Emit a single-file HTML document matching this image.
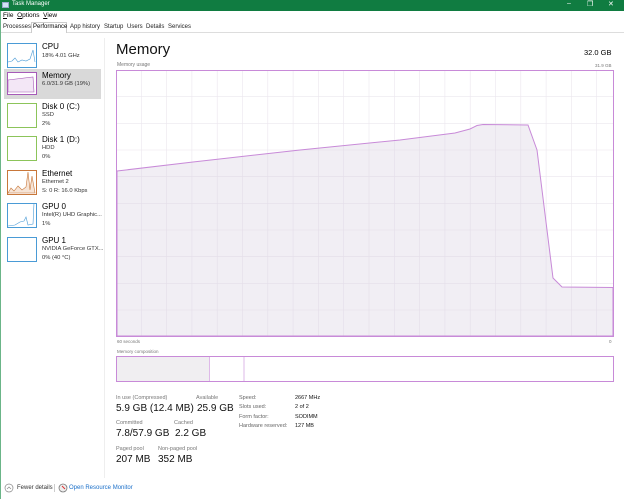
<!DOCTYPE html>
<html><head><meta charset="utf-8"><style>
*{margin:0;padding:0;box-sizing:border-box}
body{width:624px;height:499px;overflow:hidden;background:#fff;font-family:"Liberation Sans",sans-serif;position:relative;color:#000}
.a{position:absolute;white-space:nowrap}
.tb{left:0;top:0;width:624px;height:11px;background:#107c41}
.it{position:absolute;left:4px;width:97px;height:32px}
.th{position:absolute;left:3px;top:3px;width:30px;height:25px;border:1px solid}
.nm{position:absolute;left:38px;top:2px;font-size:8px;white-space:nowrap}
.s{position:absolute;left:38px;font-size:5.8px;color:#333;white-space:nowrap}
.lb{font-size:5.5px;color:#777}
.v{font-size:10px;color:#111}
.k{font-size:5.5px;color:#666}
.kv{font-size:5.5px;color:#111}
.tab{position:absolute;top:24px;font-size:6px;color:#222;white-space:nowrap}
</style></head><body>
<div class="a tb"></div>
<div class="a" style="left:2px;top:2px;width:7px;height:6px;background:#cfe3f5;border:1px solid #9ac"></div>
<div class="a" style="left:12px;top:1px;font-size:6px;color:#fff">Task Manager</div>
<div class="a" style="left:567px;top:0;font-size:7px;color:#fff">–</div>
<div class="a" style="left:587px;top:0;font-size:7px;color:#fff">❐</div>
<div class="a" style="left:608px;top:0;font-size:7px;color:#fff">✕</div>
<div class="a" style="left:0;top:11px;width:1px;height:488px;background:#6bb588"></div>
<div class="a" style="left:3px;top:12px;font-size:6.5px"><u>F</u>ile&nbsp;&nbsp;<u>O</u>ptions&nbsp;&nbsp;<u>V</u>iew</div>
<div class="a" style="left:1px;top:23px;width:623px;height:10px;border-bottom:1px solid #ddd"></div>
<div class="tab" style="left:3px">Processes</div>
<div class="a" style="left:31px;top:22px;width:36px;height:11px;border:1px solid #ccc;border-bottom:none;background:#fff"></div>
<div class="tab" style="left:33px;color:#000">Performance</div>
<div class="tab" style="left:70px">App history</div>
<div class="tab" style="left:104px">Startup</div>
<div class="tab" style="left:127px">Users</div>
<div class="tab" style="left:146px">Details</div>
<div class="tab" style="left:168px">Services</div>
<div class="a" style="left:104px;top:38px;width:1px;height:440px;background:#eee"></div>

<div class="it" style="top:40px"><div class="th" style="border-color:#4a9bd6"></div><div class="nm">CPU</div><div class="s" style="top:13px">18% 4.01 GHz</div></div>
<div class="it" style="top:69px;background:#d9d9d9;height:30px"><div class="th" style="border-color:#a65ab8;background:#fff;height:23px;top:3px"></div><div class="nm">Memory</div><div class="s" style="top:12px">6.0/31.9 GB (19%)</div></div>
<div class="it" style="top:100px"><div class="th" style="border-color:#8cc45a"></div><div class="nm">Disk 0 (C:)</div><div class="s" style="top:12px">SSD</div><div class="s" style="top:21px">2%</div></div>
<div class="it" style="top:133px"><div class="th" style="border-color:#8cc45a"></div><div class="nm">Disk 1 (D:)</div><div class="s" style="top:12px">HDD</div><div class="s" style="top:21px">0%</div></div>
<div class="it" style="top:167px"><div class="th" style="border-color:#c8773a"></div><div class="nm">Ethernet</div><div class="s" style="top:12px">Ethernet 2</div><div class="s" style="top:21px">S: 0 R: 16.0 Kbps</div></div>
<div class="it" style="top:200px"><div class="th" style="border-color:#4a9bd6"></div><div class="nm">GPU 0</div><div class="s" style="top:12px">Intel(R) UHD Graphic...</div><div class="s" style="top:21px">1%</div></div>
<div class="it" style="top:234px"><div class="th" style="border-color:#4a9bd6"></div><div class="nm">GPU 1</div><div class="s" style="top:12px">NVIDIA GeForce GTX...</div><div class="s" style="top:21px">0% (40 °C)</div></div>

<svg class="a" style="left:0;top:0" width="624" height="499">
<polyline points="8,62 12,61 15,58 18,62 22,60 26,61 30,59 33,50 35,62" fill="none" stroke="#4a9bd6" stroke-width=".6"/>
<polygon points="8,92 8,80 33,77 34,92" fill="#f3e7f6" stroke="#a65ab8" stroke-width=".6"/>
<polygon points="8,193 11,188 14,191 18,186 22,190 26,187 28,172 30,190 32,176 35,193" fill="#f6e4d6" stroke="#c8773a" stroke-width=".6"/>
<polyline points="8,226 15,225 20,222 24,221 26,217 28,225 33,224 34,203" fill="none" stroke="#4a9bd6" stroke-width=".6"/>
<g stroke="#ebe6ee" stroke-width=".6">
<path d="M141.3 71V336M166.6 71V336M191.9 71V336M217.2 71V336M242.5 71V336M267.8 71V336M293.1 71V336M318.4 71V336M343.7 71V336M369 71V336M394.3 71V336M419.6 71V336M444.9 71V336M470.2 71V336M495.5 71V336M520.8 71V336M546.1 71V336M571.4 71V336M596.7 71V336"/>
<path d="M117 96.7H613M117 123.3H613M117 150H613M117 176.6H613M117 203.3H613M117 230H613M117 256.6H613M117 283.3H613M117 310H613"/>
</g>
<polygon points="117,171 193,162 300,150 400,140 455,133 470,129 477,125.5 483,124.5 528,125 537,150 553,278 562,287 613,287.5 613,336 117,336" fill="#d8cfe0" fill-opacity=".35" stroke="#c88ad8" stroke-width="1"/>
<rect x="116.5" y="70.5" width="497" height="266" fill="none" stroke="#c88ad8"/>
<rect x="116.5" y="356.5" width="497" height="25" fill="none" stroke="#c88ad8"/>
<rect x="117" y="357" width="92" height="24" fill="#f0eef1"/>
<line x1="209.5" y1="357" x2="209.5" y2="381" stroke="#c88ad8" stroke-width=".6"/>
<line x1="244" y1="357" x2="244" y2="381" stroke="#c88ad8" stroke-width=".6"/>
<circle cx="9" cy="488" r="4" fill="none" stroke="#888" stroke-width=".7"/>
<path d="M7 489l2-2 2 2" fill="none" stroke="#888" stroke-width=".7"/>
<circle cx="63" cy="488" r="4" fill="#eee" stroke="#777" stroke-width=".8"/>
<path d="M62 486l3 3" stroke="#d33" stroke-width="1"/>
</svg>

<div class="a" style="left:116px;top:41px;font-size:15px;color:#111">Memory</div>
<div class="a" style="left:584px;top:48px;font-size:7.5px">32.0 GB</div>
<div class="a" style="left:117px;top:62px;font-size:5px;color:#777">Memory usage</div>
<div class="a" style="left:595px;top:63px;font-size:4.5px;color:#777">31.9 GB</div>
<div class="a" style="left:117px;top:339px;font-size:4.5px;color:#777">60 seconds</div>
<div class="a" style="left:609px;top:339px;font-size:4.5px;color:#777">0</div>
<div class="a" style="left:117px;top:349px;font-size:4.5px;color:#777">Memory composition</div>

<div class="a lb" style="left:116px;top:395px">In use (Compressed)</div>
<div class="a v" style="left:116px;top:403px">5.9 GB (12.4 MB)</div>
<div class="a lb" style="left:196px;top:395px">Available</div>
<div class="a v" style="left:197px;top:403px">25.9 GB</div>
<div class="a lb" style="left:116px;top:420px">Committed</div>
<div class="a v" style="left:116px;top:428px">7.8/57.9 GB</div>
<div class="a lb" style="left:174px;top:420px">Cached</div>
<div class="a v" style="left:175px;top:428px">2.2 GB</div>
<div class="a lb" style="left:116px;top:446px">Paged pool</div>
<div class="a v" style="left:116px;top:454px">207 MB</div>
<div class="a lb" style="left:158px;top:446px">Non-paged pool</div>
<div class="a v" style="left:158px;top:454px">352 MB</div>

<div class="a k" style="left:239px;top:395px">Speed:</div><div class="a kv" style="left:295px;top:395px">2667 MHz</div>
<div class="a k" style="left:239px;top:404px">Slots used:</div><div class="a kv" style="left:295px;top:404px">2 of 2</div>
<div class="a k" style="left:239px;top:414px">Form factor:</div><div class="a kv" style="left:295px;top:414px">SODIMM</div>
<div class="a k" style="left:239px;top:423px">Hardware reserved:</div><div class="a kv" style="left:295px;top:423px">127 MB</div>

<div class="a" style="left:17px;top:485px;font-size:6px;color:#333">Fewer details</div>
<div class="a" style="left:54px;top:484px;width:1px;height:8px;background:#ccc"></div>
<div class="a" style="left:69px;top:485px;font-size:6px;color:#1a6fc9">Open Resource Monitor</div>
</body></html>
